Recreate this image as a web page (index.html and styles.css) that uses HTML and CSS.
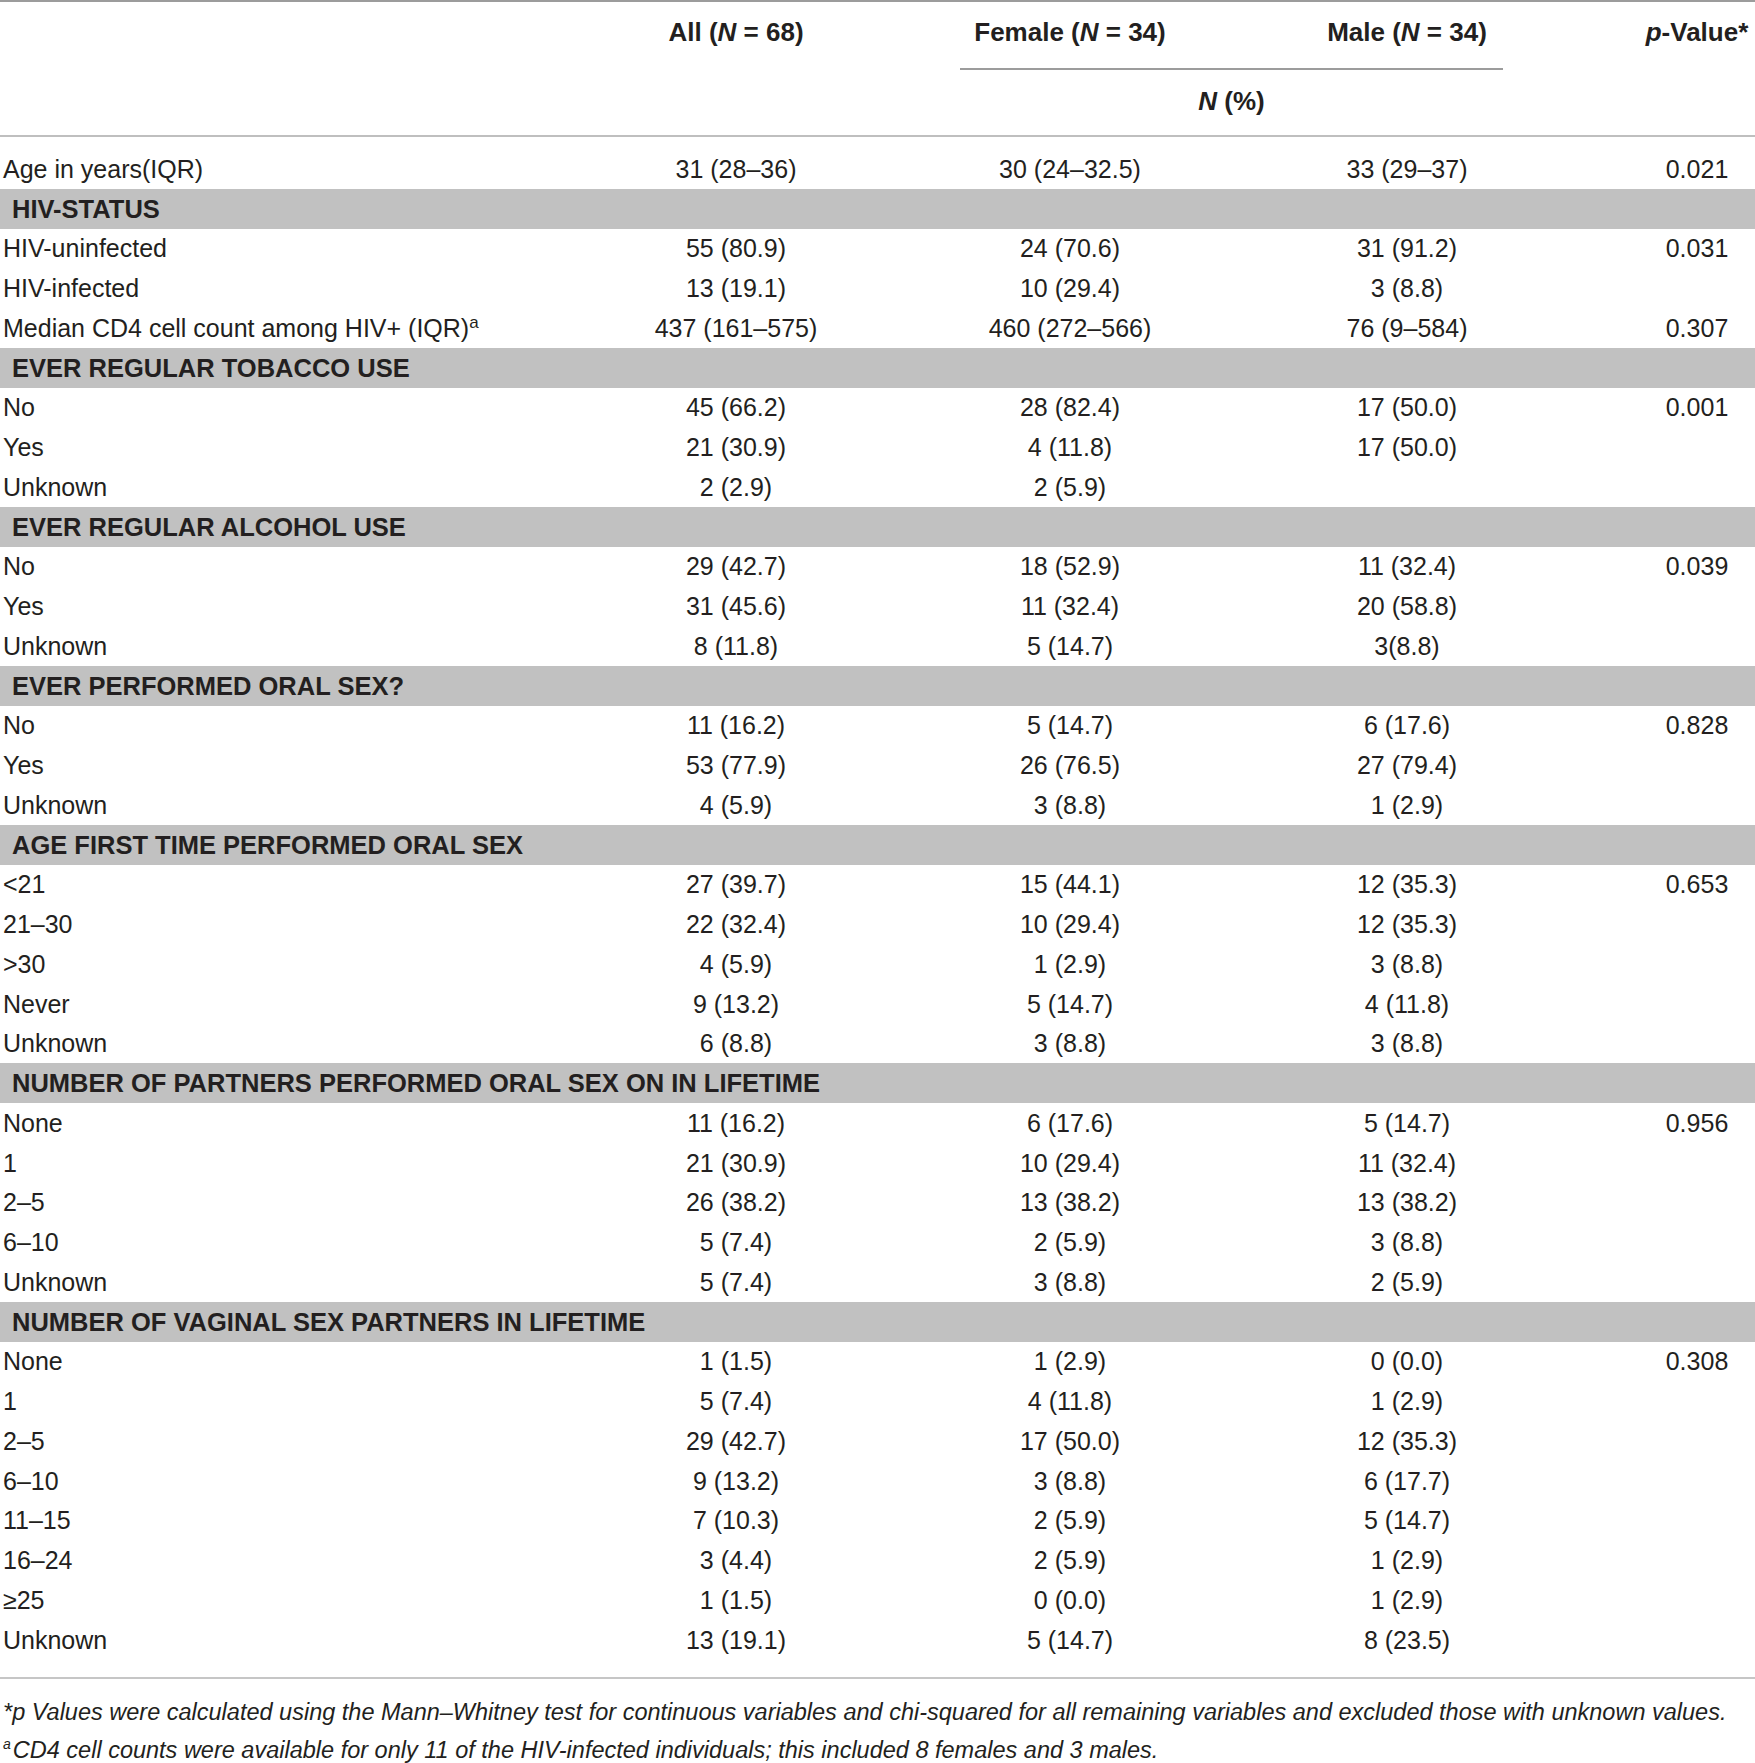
FILE: index.html
```html
<!DOCTYPE html>
<html lang="en">
<head>
    <meta charset="UTF-8">
    <title>Oral sex behaviour by sex</title>
    <link rel="stylesheet" href="styles.css">
</head>
<body>
    <table class="data-table">
        <colgroup>
            <col class="col-label">
            <col class="col-all">
            <col class="col-female">
            <col class="col-male">
            <col class="col-p">
        </colgroup>
        <thead>
            <tr class="head-top">
                <th></th>
                <th>All (<i>N</i> = 68)</th>
                <th>Female (<i>N</i> = 34)</th>
                <th>Male (<i>N</i> = 34)</th>
                <th class="p"><i>p</i>-Value*</th>
            </tr>
            <tr class="head-sub">
                <th></th>
                <th></th>
                <th colspan="2">
                    <div class="span-rule"></div>
                    <div class="span-label"><i>N</i> (%)</div>
                </th>
                <th></th>
            </tr>
        </thead>
        <tbody>
            <tr class="first"><td>Age in years(IQR)</td><td>31 (28–36)</td><td>30 (24–32.5)</td><td>33 (29–37)</td><td class="p">0.021</td></tr>

            <tr class="band"><td colspan="5">HIV-STATUS</td></tr>
            <tr><td>HIV-uninfected</td><td>55 (80.9)</td><td>24 (70.6)</td><td>31 (91.2)</td><td class="p">0.031</td></tr>
            <tr><td>HIV-infected</td><td>13 (19.1)</td><td>10 (29.4)</td><td>3 (8.8)</td><td class="p"></td></tr>
            <tr><td>Median CD4 cell count among HIV+ (IQR)<sup>a</sup></td><td>437 (161–575)</td><td>460 (272–566)</td><td>76 (9–584)</td><td class="p">0.307</td></tr>

            <tr class="band"><td colspan="5">EVER REGULAR TOBACCO USE</td></tr>
            <tr><td>No</td><td>45 (66.2)</td><td>28 (82.4)</td><td>17 (50.0)</td><td class="p">0.001</td></tr>
            <tr><td>Yes</td><td>21 (30.9)</td><td>4 (11.8)</td><td>17 (50.0)</td><td class="p"></td></tr>
            <tr><td>Unknown</td><td>2 (2.9)</td><td>2 (5.9)</td><td></td><td class="p"></td></tr>

            <tr class="band"><td colspan="5">EVER REGULAR ALCOHOL USE</td></tr>
            <tr><td>No</td><td>29 (42.7)</td><td>18 (52.9)</td><td>11 (32.4)</td><td class="p">0.039</td></tr>
            <tr><td>Yes</td><td>31 (45.6)</td><td>11 (32.4)</td><td>20 (58.8)</td><td class="p"></td></tr>
            <tr><td>Unknown</td><td>8 (11.8)</td><td>5 (14.7)</td><td>3(8.8)</td><td class="p"></td></tr>

            <tr class="band"><td colspan="5">EVER PERFORMED ORAL SEX?</td></tr>
            <tr><td>No</td><td>11 (16.2)</td><td>5 (14.7)</td><td>6 (17.6)</td><td class="p">0.828</td></tr>
            <tr><td>Yes</td><td>53 (77.9)</td><td>26 (76.5)</td><td>27 (79.4)</td><td class="p"></td></tr>
            <tr><td>Unknown</td><td>4 (5.9)</td><td>3 (8.8)</td><td>1 (2.9)</td><td class="p"></td></tr>

            <tr class="band"><td colspan="5">AGE FIRST TIME PERFORMED ORAL SEX</td></tr>
            <tr><td>&lt;21</td><td>27 (39.7)</td><td>15 (44.1)</td><td>12 (35.3)</td><td class="p">0.653</td></tr>
            <tr><td>21–30</td><td>22 (32.4)</td><td>10 (29.4)</td><td>12 (35.3)</td><td class="p"></td></tr>
            <tr><td>&gt;30</td><td>4 (5.9)</td><td>1 (2.9)</td><td>3 (8.8)</td><td class="p"></td></tr>
            <tr><td>Never</td><td>9 (13.2)</td><td>5 (14.7)</td><td>4 (11.8)</td><td class="p"></td></tr>
            <tr><td>Unknown</td><td>6 (8.8)</td><td>3 (8.8)</td><td>3 (8.8)</td><td class="p"></td></tr>

            <tr class="band"><td colspan="5">NUMBER OF PARTNERS PERFORMED ORAL SEX ON IN LIFETIME</td></tr>
            <tr><td>None</td><td>11 (16.2)</td><td>6 (17.6)</td><td>5 (14.7)</td><td class="p">0.956</td></tr>
            <tr><td>1</td><td>21 (30.9)</td><td>10 (29.4)</td><td>11 (32.4)</td><td class="p"></td></tr>
            <tr><td>2–5</td><td>26 (38.2)</td><td>13 (38.2)</td><td>13 (38.2)</td><td class="p"></td></tr>
            <tr><td>6–10</td><td>5 (7.4)</td><td>2 (5.9)</td><td>3 (8.8)</td><td class="p"></td></tr>
            <tr><td>Unknown</td><td>5 (7.4)</td><td>3 (8.8)</td><td>2 (5.9)</td><td class="p"></td></tr>

            <tr class="band"><td colspan="5">NUMBER OF VAGINAL SEX PARTNERS IN LIFETIME</td></tr>
            <tr><td>None</td><td>1 (1.5)</td><td>1 (2.9)</td><td>0 (0.0)</td><td class="p">0.308</td></tr>
            <tr><td>1</td><td>5 (7.4)</td><td>4 (11.8)</td><td>1 (2.9)</td><td class="p"></td></tr>
            <tr><td>2–5</td><td>29 (42.7)</td><td>17 (50.0)</td><td>12 (35.3)</td><td class="p"></td></tr>
            <tr><td>6–10</td><td>9 (13.2)</td><td>3 (8.8)</td><td>6 (17.7)</td><td class="p"></td></tr>
            <tr><td>11–15</td><td>7 (10.3)</td><td>2 (5.9)</td><td>5 (14.7)</td><td class="p"></td></tr>
            <tr><td>16–24</td><td>3 (4.4)</td><td>2 (5.9)</td><td>1 (2.9)</td><td class="p"></td></tr>
            <tr><td>≥25</td><td>1 (1.5)</td><td>0 (0.0)</td><td>1 (2.9)</td><td class="p"></td></tr>
            <tr class="last"><td>Unknown</td><td>13 (19.1)</td><td>5 (14.7)</td><td>8 (23.5)</td><td class="p"></td></tr>
        </tbody>
    </table>

    <div class="notes">
        <p>*<i>p</i> Values were calculated using the Mann–Whitney test for continuous variables and chi-squared for all remaining variables and excluded those with unknown values.</p>
        <p><sup>a</sup>CD4 cell counts were available for only 11 of the HIV-infected individuals; this included 8 females and 3 males.</p>
    </div>
</body>
</html>
```

FILE: styles.css
```css
body {
    margin: 0;
    background-color: #ffffff;
    color: #231f20;
    font-family: 'Liberation Sans', Arial, sans-serif;
    font-size: 25px;
}

.data-table {
    width: 1755px;
    border-collapse: collapse;
    table-layout: fixed;
}

.col-label { width: 590px; }
.col-all { width: 292px; }
.col-female { width: 376px; }
.col-male { width: 298px; }
.col-p { width: 199px; }

/* header */
thead {
    border-top: 2px solid #9c9c9c;
    border-bottom: 2px solid #bfbfbf;
}

th {
    padding: 0;
    font-size: 26px;
    font-weight: bold;
    text-align: center;
    line-height: 30px;
    white-space: nowrap;
}

.head-top th {
    height: 60px;
    vertical-align: middle;
}

.head-sub th {
    vertical-align: top;
}

.span-rule {
    height: 2px;
    margin: 6px 53px 0 78px;
    background-color: #9c9c9c;
}

.span-label {
    margin: 0 53px 0 78px;
    padding: 16px 0 19px;
}

/* body */
td {
    height: 39.75px;
    padding: 0;
    line-height: 30px;
    text-align: center;
    vertical-align: middle;
    white-space: nowrap;
}

td:first-child {
    text-align: left;
    padding-left: 3px;
}

.p {
    padding-left: 83px;
}

tr.first td {
    padding-top: 12px;
}

tr.last td {
    padding-bottom: 17px;
}

tbody {
    border-bottom: 2px solid #c6c6c6;
}

tr.band td {
    background-color: #c1c1c1;
    font-size: 25.5px;
    font-weight: bold;
    padding-left: 12px;
    text-align: left;
}

sup {
    font-size: 17px;
    line-height: 0;
    vertical-align: 9px;
}

/* footnotes */
.notes {
    padding-top: 14px;
    font-style: italic;
    font-size: 23.5px;
}

.notes p {
    margin: 0;
    padding-left: 3px;
    line-height: 38px;
    white-space: nowrap;
}

.notes sup {
    font-size: 14px;
    vertical-align: 9px;
    margin-right: 2px;
}
```
